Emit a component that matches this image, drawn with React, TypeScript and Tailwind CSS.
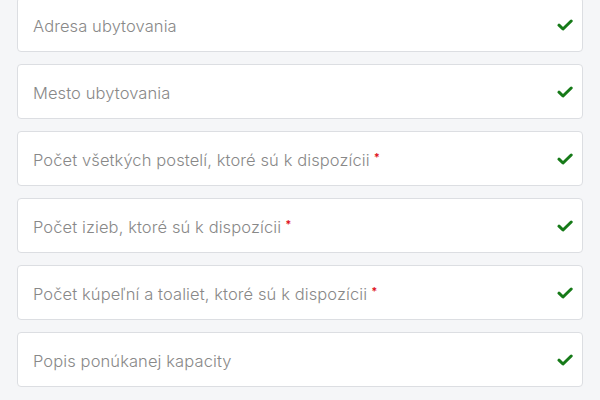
import React from "react";

const fields: { label: string; required?: boolean }[] = [
  { label: "Adresa ubytovania" },
  { label: "Mesto ubytovania" },
  { label: "Počet všetkých postelí, ktoré sú k dispozícii", required: true },
  { label: "Počet izieb, ktoré sú k dispozícii", required: true },
  { label: "Počet kúpeľní a toaliet, ktoré sú k dispozícii", required: true },
  { label: "Popis ponúkanej kapacity" },
];

function Check() {
  return (
    <svg width="16" height="12" viewBox="0 0 16 12" fill="none">
      <path d="M2 6.2 L6 10 L14.2 2" stroke="#167a18" strokeWidth="3" strokeLinecap="round" strokeLinejoin="round" />
    </svg>
  );
}

export default function App() {
  return (
    <div className="w-[600px] h-[400px] overflow-hidden bg-[#f5f6f8]" style={{ fontFamily: "Inter, 'Open Sans', sans-serif" }}>
      <div className="flex flex-col gap-3 px-[17px] mt-[-3px]">
        {fields.map((f) => (
          <div
            key={f.label}
            className="h-[55px] flex items-center justify-between bg-white border border-[#dcdee2] rounded-[4px] pl-[15px] pr-[9px]"
          >
            <span className="relative top-[1.5px] text-[16.5px] font-light text-[#888888] tracking-[0.1px]">
              {f.label}
              {f.required && <span className="text-[#e0141e] text-[11px] font-bold relative top-[-5px] ml-[4px]">*</span>}
            </span>
            <Check />
          </div>
        ))}
      </div>
    </div>
  );
}
